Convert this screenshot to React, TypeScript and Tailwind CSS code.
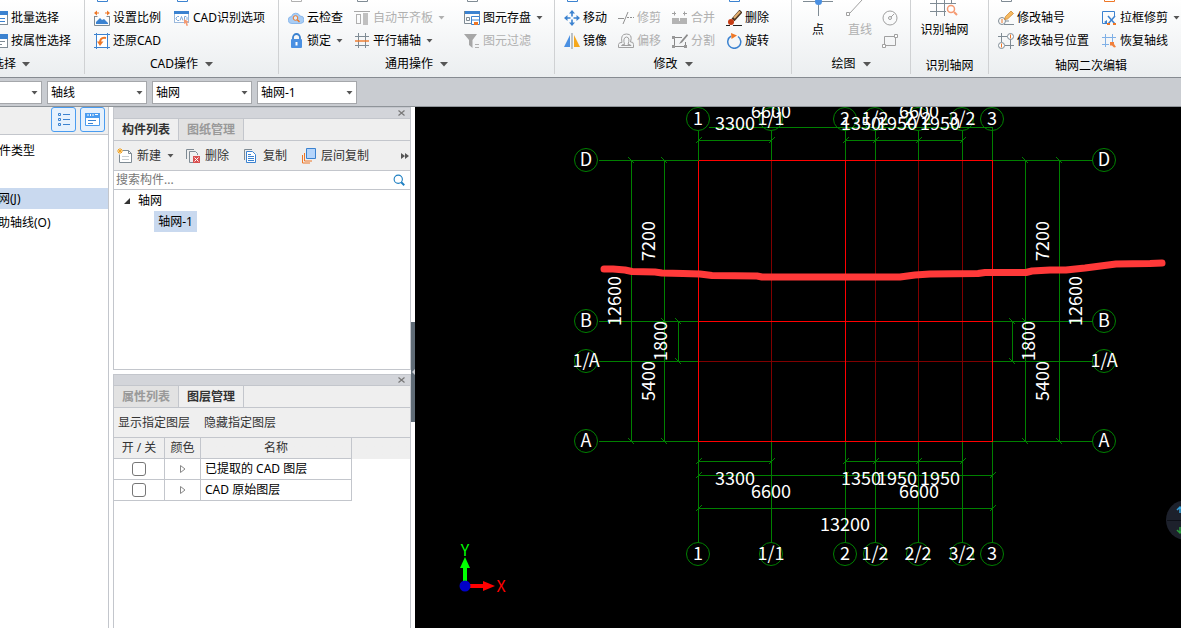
import type { ReactNode } from 'react';
import clsx from 'clsx';

const BLUE = '#3b82d0';
const GRAY = '#7f8b94';
const ORANGE = '#ee7726';

const Icon = ({ children, size = 16 }: { children: ReactNode; size?: number }) => (
  <svg width={size} height={size} viewBox="0 0 16 16" fill="none" className="shrink-0" aria-hidden="true">
    {children}
  </svg>
);

const Caret = ({ className = 'text-[#555]' }: { className?: string }) => (
  <svg width="7" height="4" viewBox="0 0 7 4" className={clsx('shrink-0', className)} aria-hidden="true">
    <path d="M0.5 0h6L3.5 3.5z" fill="currentColor" />
  </svg>
);

const TitleCaret = () => (
  <svg width="8" height="5" viewBox="0 0 8 5" className="shrink-0 text-[#555]" aria-hidden="true">
    <path d="M0 0h8L4 4.5z" fill="currentColor" />
  </svg>
);

const icons = {
  batch: (
    <Icon>
      <rect x="1.5" y="1.5" width="14" height="13" fill="#fff" stroke={GRAY} />
      <path d="M1 1h15v4H1z" fill={BLUE} />
      <path d="M4 8.5h9M4 11.5h9" stroke={BLUE} />
    </Icon>
  ),
  byAttr: (
    <Icon>
      <rect x="1.5" y="1.5" width="14" height="13" fill="#fff" stroke={GRAY} />
      <path d="M1 1h15v5H1z" fill={BLUE} />
      <path d="M4 8.5h9M4 11.5h6" stroke={GRAY} />
    </Icon>
  ),
  scale: (
    <Icon>
      <path d="M1 3h4M11 3h4" stroke={ORANGE} />
      <path d="M3 .5v5L0 3zM13 .5v5L16 3z" fill={ORANGE} />
      <path d="M.5 6v9.500h15V6M.5 6.500h3M12.500 6.500h3" stroke={GRAY} />
      <path d="M2 14v-2l4-4 2 2 2-1 4 4v1z" fill={BLUE} />
    </Icon>
  ),
  restore: (
    <Icon>
      <path d="M2.500 0v16M13.500 0v16M0 1.500h16M0 14.500h16" stroke={BLUE} />
      <path d="M2.500 1.500h11v13h-11z" fill="#fff" stroke={BLUE} />
      <path d="M12 5C7 4 6 7 6 10" stroke={ORANGE} strokeWidth="2" />
      <path d="M3 8.500h6.500L6 13z" fill={ORANGE} />
    </Icon>
  ),
  cadOption: (
    <Icon>
      <rect x=".5" y="1.500" width="14" height="11" fill="#fff" stroke="#9bb9dc" />
      <path d="M0 1h15v3H0z" fill={BLUE} />
      <path d="M5 6.500H3.500L2 8v1l1.500 1.500H5M6 10.500l1.500-4 1.500 4M10.500 6.500v4h1.500l1-1v-2l-1-1z" stroke="#7da7d8" />
      <path d="M10 9l5 3-2 .5 1 3-1.500.5-1-3-1.500 1z" fill="#f59a72" />
    </Icon>
  ),
  cloud: (
    <Icon>
      <path d="M4 13.500a3.500 3.500 0 0 1-.5-7A4.500 4.500 0 0 1 12 6a3.700 3.700 0 0 1 .5 7.500z" fill="#a9cdf4" stroke="#8bb8ec" />
      <circle cx="7.500" cy="8" r="2.300" fill="#dcebfb" stroke={ORANGE} />
      <path d="M9.300 9.800l2.200 2.200" stroke={ORANGE} strokeWidth="1.500" />
    </Icon>
  ),
  lock: (
    <Icon>
      <path d="M5 7V4.500a3.500 3.500 0 0 1 7 0V7" stroke={BLUE} strokeWidth="1.800" />
      <rect x="3" y="6" width="11" height="9" rx="1" fill="#4a90e2" />
      <path d="M8.500 9v3.500" stroke="#fff" strokeWidth="2" />
    </Icon>
  ),
  alignSlab: (
    <Icon>
      <path d="M0 1.500h16" stroke="#a8a8a8" />
      <rect x="2.500" y="4.500" width="4" height="9" stroke="#b0b0b0" />
      <path d="M9 3h5v12H9z" fill="#c0c0c0" />
    </Icon>
  ),
  parallelAxis: (
    <Icon>
      <path d="M4.500 0v15M11.500 0v15M1 3.500h14M1 12.500h14" stroke={GRAY} />
      <path d="M1 8h14" stroke={ORANGE} strokeWidth="1.400" />
    </Icon>
  ),
  saveElement: (
    <Icon>
      <path d="M0 1h16v3H0z" fill={BLUE} />
      <path d="M.5 1v12.500H7M15.500 4v3" stroke={GRAY} />
      <path d="M2.500 7.500h3v3h-3z" stroke={GRAY} />
      <path d="M7.500 6.500h8v8h-8z" fill="#fff" stroke={BLUE} />
      <path d="M8 10h7" stroke={BLUE} />
      <path d="M10 12h4v3h-4z" fill={ORANGE} />
    </Icon>
  ),
  filter: (
    <Icon>
      <path d="M0 1h13L8.500 7v8L5 12V7z" fill="#a7a7a7" />
      <path d="M11 11.500h4M11 14.500h4" stroke="#b0b0b0" />
    </Icon>
  ),
  move: (
    <Icon>
      <path d="M8 0l3 3.500H5zM8 16l3-3.500H5zM0 8l3.500-3v6zM16 8l-3.500-3v6z" fill={BLUE} />
      <path d="M8 3v3.500M8 9.500V13M3 8h3.500M9.500 8H13" stroke={BLUE} strokeWidth="1.600" />
    </Icon>
  ),
  trim: (
    <Icon>
      <path d="M0 8.500h6M5 14l5-12" stroke="#909090" />
      <path d="M9 7.500h7" stroke="#909090" strokeDasharray="2 1" />
    </Icon>
  ),
  merge: (
    <Icon>
      <path d="M0 3.500h4M2.500 1.500v4M15 3.500h-4M12.500 1.500v4" stroke="#a0a0a0" />
      <path d="M0 8h15v6H0z" fill="#b4b4b4" />
      <path d="M7.500 8v3" stroke="#f4f5f6" />
    </Icon>
  ),
  erase: (
    <Icon>
      <path d="M0 15.500h4M7 15.500h9" stroke="#222" />
      <path d="M15 1l-8 9" stroke="#4b3420" strokeWidth="4" />
      <path d="M14 1.500L8 8" stroke="#e5b070" strokeWidth="2" />
      <circle cx="5" cy="12" r="3" fill="#c63c14" />
    </Icon>
  ),
  mirror: (
    <Icon>
      <path d="M6 2v12H0z" fill="#4a90e2" />
      <path d="M10 2v12h6z" fill="#f6a81c" />
      <path d="M8 0v16" stroke={GRAY} />
    </Icon>
  ),
  offset: (
    <Icon>
      <path d="M.5 14.500v-3Q1 9 4 9.500 2 1 8.500 1 15 1 12.500 9q3-.500 3 2.500v3z" stroke="#a0a0a0" />
      <path d="M3.500 12.500q0-1 3-1-2-7 2-7.500 4 .500 1.500 7.500 3 0 3 1z" stroke="#a0a0a0" />
    </Icon>
  ),
  split: (
    <Icon>
      <path d="M2 4.500h8M2.500 4.500v9h11V9" stroke="#888" />
      <path d="M0 3h3v3H0zM0 12h3v3H0zM12 12h3v3h-3z" fill="#999" />
      <path d="M15 1l-6 7-2 3 3-1.500 6-7z" fill="#8b8b8b" />
    </Icon>
  ),
  rotate: (
    <Icon>
      <path d="M5 3.200A6.500 6.500 0 1 0 12 3.500" stroke={BLUE} strokeWidth="1.500" />
      <path d="M5 0l6 2.500L5.500 6z" fill={ORANGE} />
    </Icon>
  ),
  circle: (
    <Icon>
      <circle cx="8" cy="8" r="7" stroke="#a0a0a0" />
      <circle cx="8" cy="8" r="1.500" stroke="#a0a0a0" />
      <path d="M9 7l3-3" stroke="#a0a0a0" />
    </Icon>
  ),
  rect: (
    <Icon>
      <path d="M2.500 3.500h11v9h-11z" stroke="#a0a0a0" />
      <path d="M.500 11.500h3v3h-3zM12.500 1.500h3v3h-3z" fill="#fff" stroke="#a0a0a0" />
    </Icon>
  ),
  editAxisNo: (
    <Icon>
      <circle cx="4" cy="11" r="3.500" stroke={GRAY} />
      <path d="M4 9v4" stroke={ORANGE} />
      <path d="M6 14.500h10M8 11h3" stroke={GRAY} />
      <path d="M6.500 9.500l1-3L13 1l2.500 2.500-6 5.500z" fill="#f7bb62" stroke="#c98029" strokeWidth=".7" />
    </Icon>
  ),
  editAxisPos: (
    <Icon>
      <path d="M3.500 0v9M0 3.500h9M12.500 6v10M7 12.500h9" stroke={GRAY} />
      <circle cx="12.500" cy="3.500" r="3" fill="#fff" stroke={GRAY} />
      <circle cx="3.500" cy="12.500" r="3" fill="#fff" stroke={GRAY} />
      <path d="M12.500 1.500v4M3.500 10.500v4" stroke={ORANGE} />
    </Icon>
  ),
  boxTrim: (
    <Icon>
      <path d="M13.500 6V1.500H1.500v12H6" stroke={BLUE} />
      <path d="M3 12l3-2v4z" fill={BLUE} />
      <path d="M7 6l7 8" stroke={BLUE} strokeWidth="1.500" />
      <path d="M14 6l-7 8" stroke={BLUE} strokeWidth="1.500" />
      <path d="M6 13h3v2H6zM12 13h3v2h-3z" fill={ORANGE} />
    </Icon>
  ),
  restoreAxis: (
    <Icon>
      <path d="M4.500 1v13M11.500 1v8M1 4.500h14M1 11.500h7" stroke="#7fb0e6" />
      <path d="M9 9h4v2l2 3-2 .5-2-2H9z" fill="#f0803c" />
    </Icon>
  ),
  newFile: (
    <Icon>
      <path d="M5.500 2.500h6l3 3v9h-12v-8" fill="#fff" stroke={GRAY} />
      <path d="M11.500 2.500v3h3" stroke={GRAY} />
      <path d="M5 8.500h7M5 11.500h7" stroke="#c9ced2" />
      <path d="M1 1l4 4M5 1L1 5M3 0v6M0 3h6" stroke="#f4a21d" />
    </Icon>
  ),
  remove: (
    <Icon>
      <path d="M1.500 11V1.500H9M8 14.500H4.500v-11h6l2 2V7" stroke={GRAY} />
      <path d="M8 8h7v7H8z" fill="#d94f4f" />
      <path d="M9.500 9.500l4 4M13.500 9.500l-4 4" stroke="#fff" />
    </Icon>
  ),
  copy: (
    <Icon>
      <path d="M1.500 12V1.500H9" stroke={GRAY} />
      <path d="M3.500 3.500h6l3 3v8h-9z" fill="#fff" stroke={BLUE} />
      <path d="M5 6.500h3M5 8.500h6M5 10.500h6M5 12.500h6" stroke={BLUE} />
    </Icon>
  ),
  layerCopy: (
    <Icon>
      <path d="M1.500 7v8H9M3.500 5v8H11" stroke={ORANGE} />
      <path d="M5.500.5h9v10h-9z" fill="#b5d5fb" stroke={BLUE} />
    </Icon>
  ),
};

type IconName = keyof typeof icons;

const Command = ({
  icon,
  label,
  disabled,
  caret,
}: {
  icon: IconName;
  label: string;
  disabled?: boolean;
  caret?: boolean;
}) => (
  <button
    disabled={disabled}
    className="flex h-[23px] items-center gap-[3px] whitespace-nowrap text-black disabled:text-[#b0b0b0]"
  >
    {icons[icon]}
    <span>{label}</span>
    {caret && <Caret className={clsx('ml-[2px]', disabled ? 'text-[#b0b0b0]' : 'text-[#555]')} />}
  </button>
);

// bottom edge of the command row that is scrolled out of the ribbon
const Stub = ({ color }: { color: string }) => (
  <svg width="16" height="6" viewBox="0 0 16 6" aria-hidden="true">
    <path d="M3.500 0v1.500h10V0" stroke={color} fill="none" />
  </svg>
);

const Group = ({
  title,
  caret,
  className,
  children,
}: {
  title: string;
  caret?: boolean;
  className: string;
  children: ReactNode;
}) => (
  <section className={clsx('flex h-[74px] shrink-0 flex-col', className)}>
    <div className="h-[54px]">{children}</div>
    <div className={clsx('flex h-5 items-center justify-center gap-[7px] whitespace-nowrap', !caret && 'pt-1')}>
      {title}
      {caret && <TitleCaret />}
    </div>
  </section>
);

const Ribbon = () => (
  <header className="flex h-[78px] w-full overflow-hidden border-b border-[#868b91] bg-linear-to-b from-white to-[#ebeef0]">
    <Group title="" className="w-[85px] border-r border-[#cfd1d3]">
      <div className="-ml-2">
        <div className="h-[6px]" />
        <Command icon="batch" label="批量选择" />
        <Command icon="byAttr" label="按属性选择" />
        <button className="flex h-6 items-center gap-[6px] whitespace-nowrap">
          选择
          <TitleCaret />
        </button>
      </div>
    </Group>

    <Group title="CAD操作" caret className="w-[194px] border-r border-[#cfd1d3]">
      <div className="grid grid-cols-[80px_1fr] pl-[9px]">
        <Stub color={BLUE} />
        <Stub color={BLUE} />
        <Command icon="scale" label="设置比例" />
        <Command icon="cadOption" label="CAD识别选项" />
        <Command icon="restore" label="还原CAD" />
      </div>
    </Group>

    <Group title="通用操作" caret className="w-[276px] border-r border-[#cfd1d3]">
      <div className="grid grid-cols-[66px_110px_1fr] pl-[9px]">
        <Stub color="#b0b0b0" />
        <Stub color={GRAY} />
        <Stub color={GRAY} />
        <Command icon="cloud" label="云检查" />
        <Command icon="alignSlab" label="自动平齐板" disabled caret />
        <Command icon="saveElement" label="图元存盘" caret />
        <Command icon="lock" label="锁定" caret />
        <Command icon="parallelAxis" label="平行辅轴" caret />
        <Command icon="filter" label="图元过滤" disabled />
      </div>
    </Group>

    <Group title="修改" caret className="w-[237px] border-r border-[#cfd1d3]">
      <div className="grid grid-cols-[54px_54px_54px_1fr] pl-[9px]">
        <Stub color={BLUE} />
        <span />
        <span />
        <Stub color={BLUE} />
        <Command icon="move" label="移动" />
        <Command icon="trim" label="修剪" disabled />
        <Command icon="merge" label="合并" disabled />
        <Command icon="erase" label="删除" />
        <Command icon="mirror" label="镜像" />
        <Command icon="offset" label="偏移" disabled />
        <Command icon="split" label="分割" disabled />
        <Command icon="rotate" label="旋转" />
      </div>
    </Group>

    <Group title="绘图" caret className="w-[119px] border-r border-[#cfd1d3]">
      <div className="flex pl-[6px]">
        <button className="flex w-10 flex-col items-center gap-[7px] leading-[14px]">
          <svg width="30" height="16" viewBox="0 0 30 16" fill="none" aria-hidden="true">
            <path d="M0 1.500h30M15.500 0v16" stroke={GRAY} />
            <circle cx="15.500" cy="1.500" r="3.500" fill="#4a90e2" />
          </svg>
          点
        </button>
        <button disabled className="flex w-11 flex-col items-center gap-[7px] leading-[14px] text-[#b0b0b0]">
          <svg width="30" height="16" viewBox="0 0 30 16" fill="none" aria-hidden="true">
            <path d="M5 13L17 0" stroke="#a0a0a0" />
            <path d="M1.500 12.500h3v3h-3z" fill="#fff" stroke="#a0a0a0" />
          </svg>
          直线
        </button>
        <div>
          <div className="h-[6px]" />
          <button disabled aria-label="圆" className="flex h-[23px] items-center">
            {icons.circle}
          </button>
          <button disabled aria-label="矩形" className="flex h-[23px] items-center">
            {icons.rect}
          </button>
        </div>
      </div>
    </Group>

    <Group title="识别轴网" className="w-[78px] border-r border-[#cfd1d3]">
      <button className="mx-auto flex flex-col items-center gap-[7px] pr-[10px] leading-[14px]">
        <svg width="28" height="16" viewBox="0 0 28 16" fill="none" aria-hidden="true">
          <path d="M6.500 0v16M14.500 0v16M21.500 0v4M0 3.500h26M0 11.500h16" stroke={GRAY} />
          <circle cx="21" cy="9" r="3.500" fill="#fff" stroke="#f59a72" strokeWidth="1.500" />
          <path d="M24 12l3 3" stroke="#f59a72" strokeWidth="2" />
        </svg>
        识别轴网
      </button>
    </Group>

    <Group title="轴网二次编辑" className="-mr-3 min-w-[204px] flex-1">
      <div className="grid grid-cols-[103px_1fr] pl-[9px]">
        <Stub color={GRAY} />
        <Stub color={ORANGE} />
        <Command icon="editAxisNo" label="修改轴号" />
        <Command icon="boxTrim" label="拉框修剪" caret />
        <Command icon="editAxisPos" label="修改轴号位置" />
        <Command icon="restoreAxis" label="恢复轴线" />
      </div>
    </Group>
  </header>
);

const Picker = ({ label, value, className }: { label: string; value: string; className: string }) => (
  <label className={clsx('relative block h-[23px] border border-[#a5a7ab] bg-white', className)}>
    <span className="sr-only">{label}</span>
    <select className="block h-full w-full appearance-none bg-transparent pl-[3px] text-black outline-none">
      <option>{value}</option>
    </select>
    <span className="pointer-events-none absolute inset-y-0 right-[3px] flex items-center">
      <Caret />
    </span>
  </label>
);

const SelectionBar = () => (
  <div className="flex h-[29px] gap-[5px] border-b border-[#8f9499] bg-[#c9ccd1] pt-[3px]">
    <Picker label="楼层" value="" className="w-[42px] border-l-0" />
    <Picker label="类别" value="轴线" className="w-[100px]" />
    <Picker label="构件类型" value="轴网" className="w-[100px]" />
    <Picker label="构件" value="轴网-1" className="w-[100px]" />
  </div>
);

const TypePanel = () => (
  <aside className="flex w-[109px] shrink-0 flex-col border-r border-[#c3c6cc] bg-white">
    <div className="flex h-7 justify-end gap-1 border-b border-[#c3c6cc] bg-[#efefef] pr-[3px]">
      <button aria-label="列表视图" className="flex h-[25px] w-[25px] items-center justify-center rounded-[3px] border border-[#4a9cf0] bg-[#e6f1fd]">
        <Icon>
          <path d="M2.500 1.500h2v2h-2zM2.500 6.500h2v2h-2zM2.500 11.500h2v2h-2zM7 2.500h7M7 7.500h7M7 12.500h7" stroke={BLUE} />
        </Icon>
      </button>
      <button aria-label="面板视图" className="flex h-[25px] w-[25px] items-center justify-center rounded-[3px] border border-[#4a9cf0] bg-[#e6f1fd]">
        <Icon>
          <path d="M.500 1.500h14v12H.500z" fill="#fff" stroke="#4a9cf0" />
          <path d="M0 1h15v5H0z" fill="#4a9cf0" />
          <path d="M3 2v2M5.500 2v2M8 2v2M10 2.500h3" stroke="#fff" />
          <path d="M3 8.500h8M3 11.500h5" stroke={BLUE} />
        </Icon>
      </button>
    </div>
    <div className="flex h-[53px] items-center pb-[21px]">
      <span className="-ml-px">件类型</span>
    </div>
    <a href="#grid" className="flex h-[21px] items-center bg-[#c9d9ef]">
      <span className="-ml-0.5">网(J)</span>
    </a>
    <a href="#aux" className="flex h-[27px] items-center">
      <span className="-ml-0.5">助轴线(O)</span>
    </a>
  </aside>
);

const PanelHeader = ({ tabs, active }: { tabs: string[]; active: number }) => (
  <>
    <div className="flex h-3 items-center justify-end border-y border-[#c3c6cc] bg-[#d3d5da] pr-[5px]">
      <button aria-label="关闭">
        <svg width="7" height="6" viewBox="0 0 7 6" className="block" aria-hidden="true">
          <path d="M.5.500l6 5M6.500.500l-6 5" stroke="#777" strokeWidth="1.200" />
        </svg>
      </button>
    </div>
    <div className="flex h-[22px] border-b border-[#c3c6cc] bg-[#efefef]">
      {tabs.map((tab, i) => (
        <button
          key={tab}
          className={clsx(
            'w-[65px] border-r border-[#c3c6cc] font-bold',
            i === active ? 'text-[#333]' : 'bg-[#e2e2e2] text-[#999]',
          )}
        >
          {tab}
        </button>
      ))}
    </div>
  </>
);

const ToolButton = ({ icon, label }: { icon: IconName; label: string }) => (
  <button className="flex items-center gap-1 whitespace-nowrap">
    {icons[icon]}
    {label}
  </button>
);

const ComponentPanel = () => (
  <section className="flex h-[263px] shrink-0 flex-col border border-t-0 border-[#c3c6cc] bg-white">
    <PanelHeader tabs={['构件列表', '图纸管理']} active={0} />
    <div className="flex h-[30px] items-center border-b border-[#c3c6cc] bg-[#efefef] pr-px pl-[3px] text-[#333]">
      <ToolButton icon="newFile" label="新建" />
      <Caret className="mr-[11px] ml-[6px] text-[#555]" />
      <ToolButton icon="remove" label="删除" />
      <div className="w-[14px]" />
      <ToolButton icon="copy" label="复制" />
      <div className="w-[14px]" />
      <ToolButton icon="layerCopy" label="层间复制" />
      <button aria-label="更多" className="ml-auto">
        <svg width="8" height="6" viewBox="0 0 8 6" aria-hidden="true">
          <path d="M0 0l4 3-4 3zM4 0l4 3-4 3z" fill="#555" />
        </svg>
      </button>
    </div>
    <label className="flex h-[19px] items-center border-b border-[#c3c6cc] pr-[5px] pl-[2px]">
      <span className="sr-only">搜索构件</span>
      <input placeholder="搜索构件..." className="min-w-0 flex-1 outline-none placeholder:text-[#777]" />
      <Icon size={12}>
        <circle cx="7" cy="7" r="5.500" stroke="#1e7fc2" strokeWidth="1.500" />
        <path d="M11 11l4 4" stroke="#1e7fc2" strokeWidth="2.500" />
      </Icon>
    </label>
    <ul className="pl-[10px] text-black">
      <li>
        <span className="flex h-[21px] items-center gap-2">
          <svg width="6" height="6" viewBox="0 0 6 6" aria-hidden="true">
            <path d="M6 0v6H0z" fill="#333" />
          </svg>
          轴网
        </span>
        <ul className="pl-[30px]">
          <li className="flex h-[21px] w-[43px] items-center justify-center bg-[#c9d9ef]">轴网-1</li>
        </ul>
      </li>
    </ul>
  </section>
);

const layers = ['已提取的 CAD 图层', 'CAD 原始图层'];

const LayerPanel = () => (
  <section className="flex min-h-0 flex-1 flex-col border-x border-[#c3c6cc] bg-white">
    <PanelHeader tabs={['属性列表', '图层管理']} active={1} />
    <div className="flex h-[30px] items-center gap-[14px] border-b border-[#c3c6cc] bg-[#efefef] px-1 text-[#333]">
      <button>显示指定图层</button>
      <button>隐藏指定图层</button>
    </div>
    <div className="bg-linear-to-b from-[#efefef] from-[21px] to-white to-[21px]">
      <table className="w-[238px] table-fixed border-separate border-spacing-0">
        <thead>
          <tr className="h-[21px] text-[#333]">
            <th className="w-[51px] border-r border-b border-[#c3c6cc] p-0 font-normal">开 / 关</th>
            <th className="w-9 border-r border-b border-[#c3c6cc] p-0 font-normal">颜色</th>
            <th className="border-r border-b border-[#c3c6cc] p-0 font-normal">名称</th>
          </tr>
        </thead>
        <tbody>
          {layers.map((layer) => (
            <tr key={layer} className="h-[21px] bg-white text-black">
              <td className="border-r border-b border-[#c3c6cc] p-0">
                <input
                  type="checkbox"
                  aria-label={layer}
                  className="mx-auto block h-[14px] w-[14px] appearance-none rounded-[3px] border border-[#777] bg-white"
                />
              </td>
              <td className="border-r border-b border-[#c3c6cc] p-0">
                <svg width="6" height="8" viewBox="0 0 6 8" className="mx-auto" aria-hidden="true">
                  <path d="M.5.500v7L5 4z" fill="none" stroke="#888" />
                </svg>
              </td>
              <td className="border-r border-b border-[#c3c6cc] py-0 pr-0 pl-1">{layer}</td>
            </tr>
          ))}
        </tbody>
      </table>
    </div>
  </section>
);

const Splitter = () => (
  <div className="flex w-1 shrink-0 flex-col justify-center bg-white pt-[9px]">
    <div className="flex h-[100px] items-center bg-[#5f6b76]">
      <svg width="4" height="6" viewBox="0 0 4 6" aria-hidden="true">
        <path d="M4 0v6L1 3z" fill="#c9ccd1" />
      </svg>
    </div>
  </div>
);

const xAxes = [
  { x: 698, label: '1', main: true },
  { x: 771, label: '1/1', main: false },
  { x: 845, label: '2', main: true },
  { x: 875, label: '1/2', main: false },
  { x: 918, label: '2/2', main: false },
  { x: 962, label: '3/2', main: false },
  { x: 992, label: '3', main: true },
];

const yAxes = [
  { y: 160, label: 'D', main: true },
  { y: 321, label: 'B', main: true },
  { y: 361, label: '1/A', main: false },
  { y: 441, label: 'A', main: true },
];

// [x1, y1, x2, y2] of every dimension line
const dimLines = [
  [708, 127, 992, 127],
  [698, 140, 771, 140],
  [845, 140, 962, 140],
  [698, 461, 771, 461],
  [845, 461, 962, 461],
  [698, 475, 992, 475],
  [698, 508, 992, 508],
  [631, 160, 631, 441],
  [664, 160, 664, 441],
  [678, 321, 678, 361],
  [1025, 160, 1025, 441],
  [1059, 160, 1059, 441],
  [1012, 321, 1012, 361],
];

const slashTicks = [
  ...[698, 771, 845, 875, 918, 962].flatMap((x) => [
    [x, 140],
    [x, 461],
  ]),
  [698, 475],
  [845, 475],
  [992, 475],
  [698, 508],
  [992, 508],
];

const backTicks = [
  [631, 160],
  [664, 160],
  [664, 321],
  [678, 321],
  [678, 361],
  [631, 441],
  [664, 441],
  [1025, 160],
  [1059, 160],
  [1025, 321],
  [1012, 321],
  [1012, 361],
  [1025, 441],
  [1059, 441],
];

const dimTexts: [number, number, string][] = [
  [735, 124, '3300'],
  [771, 112, '6600'],
  [861, 124, '1350'],
  [897, 124, '1950'],
  [940, 124, '1950'],
  [919, 112, '6600'],
  [735, 479, '3300'],
  [771, 492, '6600'],
  [861, 479, '1350'],
  [897, 479, '1950'],
  [940, 479, '1950'],
  [919, 492, '6600'],
  [845, 525, '13200'],
];

const sideTexts: [number, number, string][] = [
  [649, 241, '7200'],
  [615, 301, '12600'],
  [661, 341, '1800'],
  [649, 381, '5400'],
  [1043, 241, '7200'],
  [1076, 301, '12600'],
  [1029, 341, '1800'],
  [1043, 381, '5400'],
];

const Bubble = ({ x, y, label }: { x: number; y: number; label: string }) => (
  <g>
    <circle cx={x} cy={y} r="11.500" stroke="#008000" fill="none" />
    <text x={x} y={y + 6} textAnchor="middle">
      {label}
    </text>
  </g>
);

const Canvas = () => (
  <main className="relative min-w-0 flex-1 overflow-hidden bg-black">
    <svg
      width="766"
      height="521"
      viewBox="415 107 766 521"
      fill="none"
      className="block font-['Noto_Sans_CJK_SC',sans-serif] text-[18px]"
      role="img"
      aria-label="轴网-1"
    >
      <g transform="translate(.5 .5)" shapeRendering="crispEdges">
        {xAxes.map(({ x, label, main }) => (
          <g key={label}>
            <path d={`M${x} ${label === '3' ? 127 : 130}V160M${x} 441V542`} stroke="#008000" />
            {!main && <path d={`M${x} 160V441`} stroke="#800000" />}
          </g>
        ))}
        {yAxes.map(({ y, label, main }) => (
          <g key={label}>
            <path d={`M598 ${y}H698M992 ${y}H1092`} stroke="#008000" />
            {!main && <path d={`M698 ${y}H992`} stroke="#800000" />}
          </g>
        ))}
        <path d="M698 160V441M845 160V441M992 160V441M698 160H992M698 321H992M698 441H992" stroke="#ff0000" />
        {dimLines.map(([x1, y1, x2, y2]) => (
          <path key={`${x1}-${y1}-${x2}`} d={`M${x1} ${y1}L${x2} ${y2}`} stroke="#008000" />
        ))}
        {slashTicks.map(([x, y]) => (
          <path key={`${x}-${y}`} d={`M${x - 3} ${y + 3}l6 -6`} stroke="#008000" />
        ))}
        {backTicks.map(([x, y]) => (
          <path key={`${x}-${y}`} d={`M${x - 3} ${y - 3}l6 6`} stroke="#008000" />
        ))}
      </g>

      <g fill="#fff">
        {xAxes.map(({ x, label }) => (
          <g key={label}>
            <Bubble x={x} y={119} label={label} />
            <Bubble x={x} y={554} label={label} />
          </g>
        ))}
        {yAxes.map(({ y, label }) => (
          <g key={label}>
            <Bubble x={586} y={y} label={label} />
            <Bubble x={1104} y={y} label={label} />
          </g>
        ))}
        {dimTexts.map(([x, y, text]) => (
          <text key={`${x}-${y}`} x={x} y={y + 6} textAnchor="middle">
            {text}
          </text>
        ))}
        {sideTexts.map(([x, y, text]) => (
          <text key={`${x}-${y}`} transform={`translate(${x + 6} ${y}) rotate(-90)`} textAnchor="middle">
            {text}
          </text>
        ))}
      </g>

      {/* freehand mark-up across the grid */}
      <path
        d="M604 269h9l12 1 7 1.500 23 .500 7 1 21 .500 17 .500 12 1.500 45 .500 5 1H900l15-2 15-1 48-.500 7-1h41l6-1.500 18-1h16l19-2 31-4 34-.500 12-.500"
        stroke="#ff3939"
        strokeWidth="7"
        strokeLinecap="round"
        strokeLinejoin="round"
      />

      <path d="M465 582v-16" stroke="#00ff00" strokeWidth="4" />
      <path d="M465 557l5 11h-10z" fill="#00ff00" />
      <path d="M469 586h16" stroke="#ff0000" strokeWidth="4" />
      <path d="M495 586l-12-5v10z" fill="#ff0000" />
      <circle cx="465" cy="586" r="5.500" fill="#0000c8" />
      <g className="text-base" textAnchor="middle">
        <text x="465" y="556" fill="#00ff00">
          Y
        </text>
        <text x="501" y="592" fill="#ff0000">
          X
        </text>
      </g>
    </svg>

    <div className="absolute top-[393px] -right-[25px] h-10 w-10 rounded-full bg-[#1d212c]">
      <svg width="40" height="40" viewBox="0 0 40 40" fill="none" aria-hidden="true">
        <path d="M1 20.500h39" stroke="#0d1018" />
        <path d="M14 13V7M11 10l3-3 3 3" stroke="#35a3dc" strokeWidth="1.500" />
        <path d="M14 27v6M11 30l3 3 3-3" stroke="#2a9d3c" strokeWidth="1.500" />
      </svg>
    </div>
  </main>
);

const App = () => {
  return (
    <div className="flex h-screen w-full flex-col overflow-hidden bg-white font-['Noto_Sans','Noto_Sans_CJK_SC',sans-serif] text-[12px] leading-4 text-black">
      <Ribbon />
      <SelectionBar />
      <div className="flex min-h-0 flex-1">
        <TypePanel />
        <div className="ml-1 flex w-[298px] shrink-0 flex-col gap-1">
          <ComponentPanel />
          <LayerPanel />
        </div>
        <Splitter />
        <Canvas />
      </div>
    </div>
  );
};

export default App;
